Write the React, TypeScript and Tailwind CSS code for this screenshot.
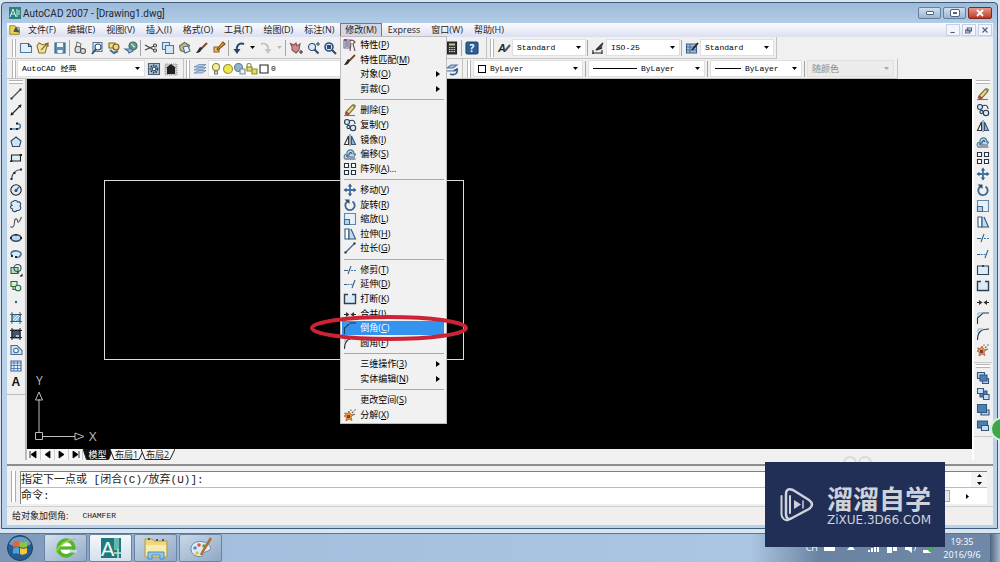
import type { ReactNode } from "react";

const ui = "font-['Open_Sans','Noto_Sans_CJK_SC',sans-serif]";
const mono = "font-['Liberation_Mono','Noto_Sans_CJK_SC',monospace]";

// All glyphs are drawn on a 14 x 14 grid
const glyphs: Record<string, ReactNode> = {
  // draw
  line: <><path d="M3 11 11 3" /><path d="M1.500 10.500h2v2h-2zM10.500 1.500h2v2h-2z" fill="#223" stroke="none" /></>,
  xline: <><path d="M2 12 12 2" stroke="#222" /><path d="m1.500 12.500 1-3.500 2.500 2.500zM12.500 1.500 9 2.500 11.500 5z" fill="#222" stroke="none" /></>,
  pline: <><path d="M2 10h6M8 10c4 0 5-5 0-5.500" stroke="#4a7fb5" strokeWidth="1.500" /><path d="M1 9h2v2H1zM7 9h2v2H7zM7 3.500h2v2H7z" fill="#223" stroke="none" /></>,
  polygon: <path d="M7 2 12 6 10.500 11.500h-7L2 6z" fill="#cfe4f3" />,
  rect: <><path d="M2.500 4h9v6h-9z" fill="#dcebf6" stroke="#222" /><path d="M1 9.500h2.500V11H1zM10.500 3H13v2h-2.500z" fill="#222" stroke="none" /></>,
  arc: <><path d="M2.500 12C3 7 6 3 12 2.500" /><path d="M1.500 11h2v2h-2zM11 1.500h2v2h-2zM4.500 5h2v2h-2z" fill="#223" stroke="none" /></>,
  circle: <><circle cx="7" cy="7" r="5.200" fill="#dcebf6" stroke="#222" /><path d="M7 7.500 10 4" stroke="#3977b7" strokeWidth="1.500" /><circle cx="7" cy="7.500" r="1" fill="#3977b7" /></>,
  cloud: <path d="M4 2.500C6 .8 8 1.500 8.500 3c3-.5 4 2 2.500 4 2 2 0 5-3 4.500-2 2-5 1-4.500-1.500-3-1-2.500-3-.5-3.500C1 5 2 2.500 4 2.500z" fill="#dcebf6" />,
  spline: <path d="M1.500 11.500c2 2 4 0 4-4.500s3-3.500 3-1 2 1 4-4" stroke="#555" />,
  ellipse: <><ellipse cx="7" cy="7" rx="5" ry="3.200" fill="#b9d7ee" strokeWidth="1.500" /><path d="M1 6h2v2H1zM6 3h2v1.500H6zM11 6h2v2h-2z" fill="#223" stroke="none" /></>,
  earc: <><path d="M3 8.500C0 5 5 3.500 8 4s5 2 3.500 4.500-4 2-4.500 1.500" fill="#dcebf6" stroke="#4a6f94" strokeWidth="1.500" /><path d="M2 8h2v2H2zM6 9h2v2H6z" fill="#223" stroke="none" /></>,
  insert: <><path d="M2 4.500h7v6H2z" fill="#b9e0b2" stroke="#2c6b37" /><circle cx="8.500" cy="5" r="3.500" /><path d="M3 10.500h5l2-2" /><path d="M13.500 13.500v-3l-3 3z" fill="#111" stroke="none" /></>,
  block: <><path d="M2 2.500h6v5H2zM4 7.500v3h3" stroke="#2c6b37" fill="#d6efd0" /><circle cx="9" cy="9" r="2.800" fill="#d6e9f5" stroke="#2c6b37" /></>,
  point: <circle cx="7" cy="7" r="1.200" fill="#355d86" stroke="none" />,
  hatch: <><path d="M3 3.500h8v7H3z" fill="#8fc6e3" stroke="#4c7e9d" /><path d="M3 1v12M11 1v12M1 3.500h12M1 10.500h12" stroke="#39566c" strokeWidth=".9" /><path d="m4 9 5-5M6 10l5-5" stroke="#fff" strokeWidth=".8" /></>,
  gradient: <><path d="M3 3h8v8H3z" fill="#4b5664" /><path d="M3 1v12M11 1v12M1 3.500h12M1 10.500h12" stroke="#20252c" /><path d="M7 8h3v2H7z" fill="#aebbc6" stroke="none" /></>,
  region: <><path d="M2 2.500h6l5 5v4H2z" fill="#cfe4f3" stroke="#4a7193" /><circle cx="7" cy="7.500" r="2.300" fill="#f5fafd" stroke="#4a7193" /></>,
  table: <><path d="M2 2h10v10H2z" fill="#e7f1fa" stroke="#3a6ba3" /><path d="M2 4h10M2 6.500h10M2 9.500h10M5 2v10M8.500 2v10" stroke="#3a6ba3" strokeWidth=".8" /></>,
  mtext: <text x="2.500" y="11" fontSize="12" fontWeight="600" fontFamily="Liberation Sans, sans-serif" fill="#111" stroke="none">A</text>,
  // modify
  erase: <><path d="M1 12.500h11" stroke="#777" /><path d="m3 9 3 2 6-7-2.500-2z" fill="#e6d58c" stroke="#756527" /><path d="m3 9 3 2-1.500 1.500L2 11z" fill="#c8494c" stroke="#84363b" strokeWidth=".6" /><path d="m9.500 2 2.500 2 1-1.500L11 1z" fill="#5c9a4d" stroke="none" /></>,
  copy: <g stroke="#243c54" fill="#d7e8f5"><circle cx="4" cy="4" r="2.500" /><circle cx="10" cy="10" r="2.700" /><circle cx="5.500" cy="9" r="1.600" /><path d="M6.500 3C10 1 12 3 12 6" fill="none" /></g>,
  mirror: <><path d="M5.500 3v8.500H1.500z" fill="#fff" stroke="#333" /><path d="M8.500 3v8.500h4z" fill="#8bb9dd" stroke="#31587b" /><path d="M7 1v12" strokeWidth=".8" /></>,
  offset: <><path d="M1.500 11.500C0 8 3 7 4 7c-1-5 7-6 7 0 2-.5 2 1 0 1.500" stroke="#457597" fill="#b9d7ee" /><path d="M4 10c-1-2 1-2 2-2 0-3 3-3 3-1M1.500 12h11M4 10h8" /></>,
  array: <g fill="#fff" stroke="#26323e"><path d="M1.500 1.500h4v4h-4zM8.500 1.500h4v4h-4zM1.500 8.500h4v4h-4zM8.500 8.500h4v4h-4z" /></g>,
  move: <><path d="M7 2v10M2 7h10" stroke="#4672a0" strokeWidth="1.800" /><path d="m7 .5 2.200 3H4.800zM7 13.500l2.200-3H4.800zM.5 7l3-2.200v4.400zM13.500 7l-3-2.200v4.400z" fill="#355f8c" stroke="none" /></>,
  rotate: <><path d="M5 3.200a4.700 4.700 0 1 0 4.500.3" stroke="#3d698f" strokeWidth="1.900" /><path d="M1.500 1.500h5v4.500z" fill="#2e4d6b" stroke="none" /></>,
  scale: <><path d="M1.500 1.500h11v11h-11z" fill="#e6f1f9" stroke="#6288a7" /><path d="M1.500 7.500h5v5h-5z" fill="#b4d3e9" stroke="#40698d" /></>,
  stretch: <><path d="M2 2h4v10H2z" fill="#fff" stroke="#31587b" /><path d="M6 2v10h6.500L8 2" fill="#c1dcef" stroke="#31587b" /></>,
  lengthen: <><path d="M3 11 11 3" stroke="#335f8c" /><path d="M1.500 10.500h2v2h-2zM10.500 1.500h2v2h-2z" fill="#222" stroke="none" /></>,
  trim: <><path d="M1 7.500h4M8 3 5 11" stroke="#3c5f80" /><path d="M8 7.500h5" strokeDasharray="2 1" stroke="#3977b7" /></>,
  extend: <><path d="M1 7.500h3M12 3 9 11" stroke="#3c5f80" /><path d="M4.500 7.500h5" strokeDasharray="2 1" stroke="#3977b7" /></>,
  breakpt: <><path d="M1.500 3h11v8.500h-11z" fill="#dcebf6" stroke="#2b4158" /><path d="M6 2h2v2H6z" fill="#2b4158" stroke="none" /></>,
  break: <path d="M5 2.500H1.500v9h11v-9H9" fill="#dcebf6" stroke="#2b4158" strokeWidth="1.400" />,
  join: <><path d="M1 7.500h12" stroke="#222" strokeDasharray="5 2" /><path d="m3 5 3.500 2.500L3 10zM11 5 7.500 7.500 11 10z" fill="#333" stroke="none" /></>,
  chamfer: <><path d="M1.500 13V7l5.500-5h6" stroke="#26394d" /><path d="M2 6V2h5" stroke="#65a3ce" strokeWidth=".8" /></>,
  fillet: <><path d="M1.500 13C1.500 5 5 2 13 2" stroke="#26394d" /><path d="M2 6V2h5" stroke="#65a3ce" strokeWidth=".8" /></>,
  explode: <><path d="m1.500 5 3 .5L6 3l1.500 3L10 7 8 9l1 3.500L6 11l-3 2 .5-3.500L1 8l2-1z" fill="#e8953b" stroke="#b04a26" strokeWidth=".7" /><path d="M4 7h3v3H4z" fill="#6b4a34" stroke="none" /><path d="m9 5 1.500-1.500M11.500 2.500l1-1M10 7l2-1M8 3V1.500" stroke="#666" /></>,
  // draw order
  front: <g stroke="#34567c"><path d="M1.500 1.500h7v6h-7z" fill="#b8d2ea" /><path d="M6.500 7.500h6v5h-6z" fill="#b8d2ea" /><path d="M4 4h7v6H4z" fill="#4b80b8" /></g>,
  back: <g stroke="#34567c"><path d="M4 4h7v6H4z" fill="#4b80b8" /><path d="M1.500 1.500h6v5h-6zM7.500 7.500h5.500v5H7.500z" fill="#c9def1" /></g>,
  above: <g stroke="#34567c"><path d="M5 7h8v5H5z" fill="#b8d2ea" /><path d="M1.500 1.500h9v8h-9z" fill="#4b80b8" /></g>,
  under: <g stroke="#34567c"><path d="M1.500 2h10v7h-10z" fill="#4b80b8" /><path d="M5.500 6.500h7v5h-7z" fill="#c9def1" /></g>,
  // standard bar
  new: <><path d="M1.500 2.500h8l3 3v6h-11z" fill="#e3f0fb" stroke="#51789e" /><path d="M9.500 2.500v3h3" /></>,
  open: <><path d="M1 5 3 2l4 2 5-2-3 10H3z" fill="#f2e4a1" stroke="#8c7635" /><path d="m5 9 6-6M9 3h3v3" stroke="#806c31" /></>,
  save: <><path d="M2 2h10v10H2z" fill="#5e8dba" stroke="#365f87" /><path d="M4 2h6v4H4zM4.500 9h5v3h-5z" fill="#eef5fb" stroke="none" /></>,
  plot: <><path d="m4 1 4 2-1 4-4-1z" fill="#fff" stroke="#777" /><ellipse cx="5" cy="8.500" rx="3" ry="3.200" fill="#dedede" stroke="#555" /><circle cx="10" cy="10" r="2.500" fill="#dedede" stroke="#555" /></>,
  preview: <><path d="M3 1.500h9v9H3z" fill="#e3f0fb" stroke="#51789e" /><circle cx="8" cy="6" r="3" fill="#fff" /><path d="m6 8-4 5" strokeWidth="1.800" /></>,
  publish: <><path d="M2 2h6v5H2z" fill="#f3df78" stroke="#786a30" /><circle cx="9" cy="6" r="3" fill="#f0d879" stroke="#705d25" /><path d="m3 9 4 3 4-2" stroke="#4a6c8c" strokeWidth="2" /></>,
  dwf: <><circle cx="9" cy="5" r="4" fill="#5d9c6d" stroke="#36648d" /><path d="M7 3c3 0 1 3 4 3" stroke="#d9efdf" /><path d="M1 8h5V6l3 4-4 2-1-2z" fill="#9ebfdb" stroke="#4b6e8e" /></>,
  cut: <g stroke="#444"><path d="m1 4 9 5M1 9l9-4" /><circle cx="11" cy="4.500" r="1.500" /><circle cx="11" cy="9.500" r="1.500" /></g>,
  clip: <g stroke="#527798" fill="#d5e7f6"><path d="M1.500 1.500h7v7h-7z" /><path d="M4.500 4.500h8v8h-8z" /></g>,
  paste: <><path d="m1.500 5 5-3.500 5 3-3 7-6-2z" fill="#c6c08b" stroke="#6d694a" /><path d="m5 6 5-1 2 5-5 2z" fill="#e9f3fb" stroke="#53718d" /></>,
  brush: <><path d="M12 2 6 8" stroke="#764c2f" strokeWidth="2" /><path d="m7 7-2-1-4 6c3 0 5-1 6-5z" fill="#2c2c2c" stroke="none" /></>,
  blockedit: <><path d="M2 6h5v5H2z" fill="#e9c066" stroke="#8a5f27" /><path d="m5 8 6-7 2 2-7 6z" fill="#e7a843" stroke="#7c4c1b" /></>,
  undo: <><path d="M12 3C7 1 4 5 5 10" stroke="#25456e" strokeWidth="2" /><path d="M1.500 8h7L5 13z" fill="#25456e" stroke="none" /></>,
  redo: <><path d="M2 3c5-2 8 2 7 7" stroke="#bbb" strokeWidth="1.500" /><path d="M5.500 8h7L9 13z" fill="#c6c6c6" stroke="none" /></>,
  pan: <><path d="M3 6 1.500 2.500 5 4l2-2 1 3 3-2-1 6-3 3-4-3z" fill="#c98f8f" stroke="#8d5058" /><path d="M10 11h4M12 9v4" stroke="#333" /></>,
  zoomrt: <><circle cx="6" cy="6" r="3.500" fill="#dbeaf6" /><path d="m8.500 8.500 4 4" strokeWidth="2" /><path d="M10 3h4M12 1v4" /></>,
  zoomwin: <><circle cx="6" cy="6" r="4" fill="#dbeaf6" stroke="#2c4f80" strokeWidth="1.600" /><path d="m9 9 4 4" strokeWidth="2" /><path d="M4.500 4.500h3v3h-3z" fill="#2c4f80" /></>,
  props: <><path d="M1 2h6v8H1z" fill="#eff3f7" stroke="#5b6f85" /><path d="M2 4h4M2 6h4M2 8h4" /><path d="M7 3c2-2 4 0 5 1l-2 2 2 7M8 5l-1 8" stroke="#744b50" /><path d="M1 1h3v2H1z" fill="#b23aa0" stroke="none" /></>,
  calc: <><path d="M2.500 1h9v12h-9z" fill="#3a3531" stroke="#222" /><path d="M4 2.500h6v2H4z" fill="#b7c99a" stroke="none" /><path d="M4 6.500h6M4 8.500h6M4 10.500h6" stroke="#d9cfc4" strokeDasharray="1.500 .8" /></>,
  help: <><rect x="1" y="1" width="12" height="12" rx="1.500" fill="#2b5f95" stroke="#1c446f" /><text x="4.500" y="11" fontSize="10" fontWeight="700" fontFamily="Open Sans, sans-serif" fill="#fff" stroke="none">?</text></>,
  textstyle: <><text x="1" y="11" fontSize="11" fontStyle="italic" fontWeight="600" fontFamily="Liberation Sans, sans-serif" fill="#222" stroke="none">A</text><path d="m13 4-5 6" stroke="#555" strokeWidth="2" /></>,
  dimstyle: <><path d="M1 12h10M2 9v4M11 9v4" stroke="#222" /><path d="m12 2-7 7 6-2" stroke="#333" strokeWidth="1.600" fill="#555" /></>,
  tablestyle: <><path d="M1.500 3h10v9h-10z" fill="#9dbddb" stroke="#3e618a" /><path d="M1.500 6h10M1.500 9h10M5 3v9" stroke="#3e618a" strokeWidth=".8" /><path d="m13 2-6 7" stroke="#222" strokeWidth="1.800" /></>,
  gear: <><path d="M1.500 1.500h11v11h-11z" fill="#a9c0d4" stroke="#4b6074" /><circle cx="7" cy="7" r="3.500" strokeDasharray="1.500 1" stroke="#26384a" strokeWidth="1.800" /><circle cx="7" cy="7" r="1.800" fill="#fff" /></>,
  home: <><path d="M1 2h12v11H1z" fill="#c9c9c9" stroke="#999" strokeDasharray="1 1" /><path d="m7 2 5 4h-1v6H3V6H2z" fill="#222" stroke="none" /></>,
  layers: <g stroke="#6688b4" fill="#b3c9e4" strokeWidth=".8"><path d="M1 11h8l4-2.500H6z" /><path d="M1 8h8l4-2.500H6z" /><path d="M1 5h8l4-2.500H6z" /></g>,
  layerprev: <><path d="M2 6h6l4-3H6zM2 9h7l3-2" fill="#a9c6e2" stroke="#54779e" /><path d="M5 12c5 2 8-1 7-5L9 9" stroke="#315a88" strokeWidth="1.600" /></>,
  bulb: <><circle cx="7" cy="5" r="3.500" fill="#f5ef9d" stroke="#8a8438" /><path d="M5.500 9h3v3h-3z" fill="#ddd" stroke="#777" /></>,
  sun: <circle cx="7" cy="7" r="4.500" fill="#eee64b" stroke="#9a9030" />,
  freeze: <><circle cx="5.500" cy="5.500" r="4" fill="#8fb3cd" stroke="#5e8199" /><path d="M7 7h5v5H7z" fill="#eee" stroke="#789" /></>,
  unlock: <><path d="M2 6V3c0-2 4-2 4 0v2" stroke="#8a8438" /><path d="M2 5h5v4H2zM7 7h5v5H7z" fill="#e6df62" stroke="#8a8438" /></>,
  swatch: <path d="M3 3h8v8H3z" fill="#fff" stroke="#222" />,
};

function Icon({ name }: { name: string }) {
  return (
    <svg viewBox="0 0 14 14" className="h-3.5 w-3.5 shrink-0 overflow-visible" fill="none" stroke="#2f4b68" strokeWidth="1.1" aria-hidden>
      {glyphs[name]}
    </svg>
  );
}

function Tool({ name }: { name: string }) {
  return (
    <button type="button" aria-label={name} className="grid h-4 w-[17px] shrink-0 place-items-center">
      <Icon name={name} />
    </button>
  );
}

const Tools = ({ names }: { names: string[] }) => names.map((n, i) => <Tool key={i} name={n} />);
const Sep = () => <span className="mx-px h-4 w-px shrink-0 bg-[#a5a5a5]" />;
const Grip = () => <span className="mx-px h-[18px] w-1 shrink-0 border-x border-[#b4b4b4] bg-white" />;
const HGrip = () => <span className="mt-px mb-0.5 h-1 w-3.5 border-y border-[#b4b4b4] bg-white" />;

function Arrow({ className = "fill-black" }: { className?: string }) {
  return (
    <svg viewBox="0 0 5 3" className={`h-[3px] w-[5px] shrink-0 ${className}`} aria-hidden>
      <path d="M0 0h5L2.500 3z" />
    </svg>
  );
}

type ComboProps = { label: string; value: string; width: string; icon?: ReactNode; disabled?: boolean };

function Combo({ label, value, width, icon, disabled }: ComboProps) {
  return (
    <label
      className={`flex h-[17px] shrink-0 items-center gap-1 border border-[#e0e0e0] px-1 ${width} ${
        disabled ? `bg-[#ececec] text-[9px] text-[#8b8b8b] ${ui}` : `bg-white text-[8px] text-black ${mono}`
      }`}
    >
      {icon}
      <select aria-label={label} disabled={disabled} className="h-full min-w-0 flex-1 appearance-none bg-transparent leading-none outline-none">
        <option>{value}</option>
      </select>
      <Arrow className={disabled ? "fill-[#aaa]" : "fill-black"} />
    </label>
  );
}

const Rule = ({ width }: { width: string }) => <span className={`h-px shrink-0 bg-black ${width}`} />;

type Entry = { text: string; hot: string; icon?: string; sub?: boolean; more?: boolean; active?: boolean };

const modifyMenu: Entry[][] = [
  [
    { text: "特性", hot: "P", icon: "props" },
    { text: "特性匹配", hot: "M", icon: "brush" },
    { text: "对象", hot: "O", sub: true },
    { text: "剪裁", hot: "C", sub: true },
  ],
  [
    { text: "删除", hot: "E", icon: "erase" },
    { text: "复制", hot: "Y", icon: "copy" },
    { text: "镜像", hot: "I", icon: "mirror" },
    { text: "偏移", hot: "S", icon: "offset" },
    { text: "阵列", hot: "A", icon: "array", more: true },
  ],
  [
    { text: "移动", hot: "V", icon: "move" },
    { text: "旋转", hot: "R", icon: "rotate" },
    { text: "缩放", hot: "L", icon: "scale" },
    { text: "拉伸", hot: "H", icon: "stretch" },
    { text: "拉长", hot: "G", icon: "lengthen" },
  ],
  [
    { text: "修剪", hot: "T", icon: "trim" },
    { text: "延伸", hot: "D", icon: "extend" },
    { text: "打断", hot: "K", icon: "break" },
    { text: "合并", hot: "J", icon: "join" },
    { text: "倒角", hot: "C", icon: "chamfer", active: true },
    { text: "圆角", hot: "F", icon: "fillet" },
  ],
  [
    { text: "三维操作", hot: "3", sub: true },
    { text: "实体编辑", hot: "N", sub: true },
  ],
  [
    { text: "更改空间", hot: "S" },
    { text: "分解", hot: "X", icon: "explode" },
  ],
];

function ModifyMenu() {
  return (
    <div role="menu" className="absolute top-full -left-px z-30 flex h-[388px] w-[107px] flex-col border border-[#bdbdbd] bg-[#f1f1f1] py-px text-black">
      {modifyMenu.map((group, g) => (
        <div key={g} className="contents">
          {g > 0 && <hr className="my-[3px] mr-0.5 ml-[3px] border-[#a9a9a9]" />}
          {group.map((e) => (
            <button
              key={e.text}
              type="button"
              role="menuitem"
              className={`relative mr-0.5 ml-px flex min-h-0 flex-1 items-center text-left ${
                e.active ? "z-10 bg-[#3393ee] text-white" : ""
              }`}
            >
              <span className="mr-[3px] ml-px h-3.5 w-3.5">{e.icon && <Icon name={e.icon} />}</span>
              <span className="flex-1 leading-3">
                {e.text}(<u>{e.hot}</u>){e.more && "..."}
              </span>
              {e.sub && (
                <svg viewBox="0 0 4 6" className="mr-1 h-1.5 w-1" aria-hidden>
                  <path d="M0 0v6l4-3z" />
                </svg>
              )}
              {e.active && (
                <svg viewBox="0 0 160 28" className="pointer-events-none absolute top-1/2 -left-[33px] h-7 w-40 -translate-y-1/2" aria-hidden>
                  <ellipse cx="80" cy="14" rx="77" ry="11" fill="none" stroke="#cb2436" strokeWidth="4" />
                </svg>
              )}
            </button>
          ))}
        </div>
      ))}
    </div>
  );
}

const menus = ["文件(F)", "编辑(E)", "视图(V)", "插入(I)", "格式(O)", "工具(T)", "绘图(D)", "标注(N)", "修改(M)", "Express", "窗口(W)", "帮助(H)"];

function MenuBar() {
  return (
    <nav className="flex h-3.5 items-center gap-px bg-gradient-to-b from-[#fafbff] to-[#dcdff1] pl-0.5 text-[9px] leading-3 text-[#222]">
      <svg viewBox="0 0 14 14" className="mr-px h-3.5 w-3" aria-hidden>
        <path d="M1 2h6l2 2h3v8H1z" fill="#efd44e" stroke="#8c7a2a" />
        <path d="m5 9 3-6 5 7z" fill="#3d536e" />
      </svg>
      {menus.map((m) =>
        m === "修改(M)" ? (
          <div key={m} className="relative border border-[#777] bg-[#d4d6e2]">
            <button type="button" aria-expanded="true" className="block px-1">{m}</button>
            <ModifyMenu />
          </div>
        ) : (
          <button key={m} type="button" className="px-[5px] whitespace-nowrap">{m}</button>
        ),
      )}
      <div className="ml-auto flex gap-0.5 pr-px">
        {["M4 9h5", "M5 3.500h5v3.500H5zM3 6h5v3.500H3z", "m4 3 6 6M10 3 4 9"].map((d, i) => (
          <button key={i} type="button" aria-label={["Minimize", "Restore", "Close"][i]} className="border border-[#c3cfe2] bg-[#f2f5fb]">
            <svg viewBox="0 0 14 12" className="h-2.5 w-3" fill="none" stroke="#4c5d7c" strokeWidth="1.3"><path d={d} /></svg>
          </button>
        ))}
      </div>
    </nav>
  );
}

function TitleBar() {
  return (
    <header className="flex h-5 items-center gap-0.5 pl-0.5 text-[#1b2735]">
      <svg viewBox="0 0 12 12" className="h-3 w-3" aria-hidden>
        <path d="M0 0h12v12H0z" fill="#2b8079" />
        <path d="m1 10 3-8 3 8M2 7h4M8 2v8M10 3v5" stroke="#d8f2ee" fill="none" />
      </svg>
      <h1 className="font-['Roboto',sans-serif] text-[10px]">AutoCAD 2007 - [Drawing1.dwg]</h1>
      <div className="ml-auto flex gap-0.5 pr-px">
        <button type="button" aria-label="Minimize" className="grid h-3 w-[23px] place-items-center rounded-[2px] border border-[#64809f] bg-gradient-to-b from-[#cddff1] to-[#9bb6d3]">
          <span className="h-1 w-2 rounded-[1px] border border-[#52647a] bg-white" />
        </button>
        <button type="button" aria-label="Maximize" className="grid h-3 w-[23px] place-items-center rounded-[2px] border border-[#64809f] bg-gradient-to-b from-[#cddff1] to-[#9bb6d3]">
          <span className="h-1.5 w-2 rounded-[1px] border-2 border-white bg-[#52647a] outline outline-[#52647a]" />
        </button>
        <button type="button" aria-label="Close" className="grid h-3 w-6 place-items-center rounded-[2px] border border-[#7c2a25] bg-gradient-to-b from-[#e29a8c] to-[#bd3521]">
          <svg viewBox="0 0 8 8" className="h-2 w-2" stroke="#fff" strokeWidth="2"><path d="m1 1 6 6M7 1 1 7" /></svg>
        </button>
      </div>
    </header>
  );
}

const bar = "flex items-center border-r border-b border-[#c3c3c3]";

function Toolbars() {
  return (
    <div className="bg-[#f0f0f0]">
      <div className="flex h-[22px] items-stretch">
        <div className={`${bar} pr-1.5 pl-1`}>
          <Grip />
          <Tools names={["new", "open", "save"]} />
          <Sep />
          <Tools names={["plot", "preview", "publish", "dwf"]} />
          <Sep />
          <Tools names={["cut", "clip", "paste", "brush", "blockedit"]} />
          <Sep />
          <Tool name="undo" />
          <button type="button" aria-label="Undo list" className="grid h-4 w-2.5 place-items-center"><Arrow /></button>
          <Tool name="redo" />
          <button type="button" aria-label="Redo list" className="grid h-4 w-2.5 place-items-center"><Arrow className="fill-[#bbb]" /></button>
          <Sep />
          <Tools names={["pan", "zoomrt", "zoomwin", "zoomrt"]} />
          <Sep />
          <Tools names={["props", "table", "clip", "layers", "open", "calc"]} />
          <Sep />
          <Tool name="help" />
        </div>
        <div className={`${bar} pr-0.5 pl-0.5`}>
          <Grip />
          <Tool name="textstyle" />
          <Combo label="Text style" value="Standard" width="w-[74px]" />
          <Sep />
          <Tool name="dimstyle" />
          <Combo label="Dimension style" value="ISO-25" width="w-[74px]" />
          <Sep />
          <Tool name="tablestyle" />
          <Combo label="Table style" value="Standard" width="w-[74px]" />
        </div>
      </div>
      <div className="flex h-5 items-stretch">
        <div className={`${bar} pr-1 pl-1`}>
          <Grip />
          <Combo label="Workspace" value="AutoCAD 经典" width="w-[128px]" />
          <Tools names={["gear", "home"]} />
        </div>
        <div className={`${bar} pr-0.5 pl-px`}>
          <Grip />
          <Tool name="layers" />
          <button type="button" aria-label="Layer" className={`flex h-[17px] w-[235px] items-center border border-[#e0e0e0] bg-white text-[8px] ${mono}`}>
            {["bulb", "sun", "freeze", "unlock", "swatch"].map((n) => (
              <span key={n} className="-mr-0.5"><Icon name={n} /></span>
            ))}
            <span className="flex-1 pl-0.5 text-left">0</span>
            <Arrow />
          </button>
          <Tool name="layerprev" />
        </div>
        <div className={`${bar} gap-px pr-[3px] pl-[3px]`}>
          <Grip />
          <Combo label="Color" value="ByLayer" width="w-[110px]" icon={<span className="h-2 w-2 shrink-0 border border-black" />} />
          <Sep />
          <Combo label="Linetype" value="ByLayer" width="w-[117px]" icon={<Rule width="w-[44px]" />} />
          <Sep />
          <Combo label="Lineweight" value="ByLayer" width="w-[92px]" icon={<Rule width="w-[26px]" />} />
          <Sep />
          <Combo label="Plot style" value="随颜色" width="w-[87px]" disabled />
        </div>
      </div>
    </div>
  );
}

const drawTools = ["line", "xline", "pline", "polygon", "rect", "arc", "circle", "cloud", "spline", "ellipse", "earc", "insert", "block", "point", "hatch", "gradient", "region", "table", "mtext"];
const modifyTools = ["erase", "copy", "mirror", "offset", "array", "move", "rotate", "scale", "stretch", "trim", "extend", "breakpt", "break", "join", "chamfer", "fillet", "explode"];
const orderTools = ["front", "back", "above", "under"];

function Canvas() {
  return (
    <svg className="min-h-0 w-full flex-1 bg-black" fill="none" aria-label="Drawing1">
      <rect x="77.5" y="101.5" width="359" height="179" stroke="#dcdcdc" />
      <svg y="100%" overflow="visible" stroke="#bdbdbd">
        <path d="M8.500-16.500h7v7h-7zM12-17v-33M16-12.500h32" />
        <path d="m12-57-3.500 8h7zM57-12.500l-9-3.500v7z" />
        <text x="9" y="-64" fontSize="12" fontFamily="Open Sans, sans-serif" fill="#bdbdbd" stroke="none">Y</text>
        <text x="62" y="-8" fontSize="13" fontFamily="Open Sans, sans-serif" fill="#bdbdbd" stroke="none">X</text>
      </svg>
    </svg>
  );
}

function SheetTabs() {
  return (
    <div className="flex h-[11px] items-stretch bg-[#f0f0f0] text-[9px] leading-[11px] whitespace-nowrap text-[#222]">
      {["M3 2v7M9 2v7L4 5.500z", "M9 2v7L4 5.500z", "M4 2v7l5-3.500z", "M10 2v7M4 2v7l5-3.500z"].map((d, i) => (
        <button key={i} type="button" aria-label={["First", "Previous", "Next", "Last"][i]} className="border-r border-[#ccc] bg-[#f7f7f7]">
          <svg viewBox="0 0 13 11" className="h-[11px] w-[13px]" fill="#000" stroke="#000"><path d={d} strokeWidth=".8" /></svg>
        </button>
      ))}
      {["模型", "布局1", "布局2"].map((t, i) => (
        <button key={t} type="button" className={`relative text-center ${i === 0 ? "w-[27px] text-white" : "w-[31px]"}`}>
          <svg viewBox="0 0 34 11" preserveAspectRatio="none" className="absolute inset-y-0 left-0 h-full w-[calc(100%+3px)]" aria-hidden>
            <path d="M0 0 4 10.500h25L34 0" fill={i === 0 ? "#111" : "#f5f5f5"} stroke="#222" />
          </svg>
          <span className="relative pl-0.5">{t}</span>
        </button>
      ))}
    </div>
  );
}

function Workspace() {
  return (
    <div className="flex min-h-0 flex-1 bg-[#f0f0f0]">
      <aside className="w-5 border-r-2 border-[#b9b9b9]">
        <div className="flex flex-col items-center border-b border-[#bbb] pb-1">
          <HGrip />
          <Tools names={drawTools} />
        </div>
      </aside>
      <main className="flex min-w-0 flex-1 flex-col">
        <Canvas />
        <SheetTabs />
      </main>
      <aside className="w-[21px] border-l-2 border-white pr-px">
        <div className="flex flex-col items-center">
          <HGrip />
          <Tools names={modifyTools} />
        </div>
        <div className="mt-1 flex flex-col items-center border-y border-[#c8c8c8] pb-0.5">
          <HGrip />
          <Tools names={orderTools} />
        </div>
      </aside>
    </div>
  );
}

function CommandLine() {
  return (
    <section className="mt-1 flex border-t-2 border-[#8d8d8d] bg-[#f0f0f0] pt-[5px] pb-0.5">
      <span className="mx-1 h-[31px] w-[5px] border-x border-[#aaa] bg-white" />
      <div className={`min-w-0 flex-1 border-t border-l border-[#808080] bg-white text-[11px] text-[#222] ${mono}`}>
        <div className="flex h-4 items-center border-b border-[#bcbcbc]">
          <output className="flex-1 leading-4">指定下一点或 [闭合(C)/放弃(U)]:</output>
          <span className="flex h-full w-4 flex-col items-center justify-between bg-[#f4f4f4] py-0.5">
            <Arrow className="rotate-180 fill-black" />
            <Arrow />
          </span>
        </div>
        <label className="flex h-4 items-center leading-4">
          命令:
          <input aria-label="命令" className="min-w-0 flex-1 outline-none" />
          <span className="h-3 w-10 border border-[#aaa] bg-[#e6e6e6]" />
          <svg viewBox="0 0 3 5" className="mr-[18px] ml-4 h-[5px] w-[3px]" aria-hidden><path d="M0 0v5l3-2.500z" /></svg>
        </label>
      </div>
      <span className="w-1.5" />
    </section>
  );
}

const taskButton = "grid h-7 w-[43px] place-items-center rounded-[2px] border border-[#6b84a4]";

function Taskbar() {
  return (
    <footer className="flex h-[29px] items-center border-t border-[#5f7691] bg-[linear-gradient(90deg,#7b95b8,#a3bfdd_23%,#abc6e2_75%,#6a83a2_82%,#7089a8)] text-white">
      <button type="button" aria-label="Start" className="mr-2.5 ml-1.5">
        <svg viewBox="0 0 28 28" className="h-7 w-7" aria-hidden>
          <circle cx="14" cy="14" r="12.500" fill="#275b92" stroke="#1d3e63" />
          <path d="M3 10a12 12 0 0 1 22 0c-6 4-15 4-22 0z" fill="#8fb4d6" opacity=".7" />
          <path d="M7 9c2-2 4-2 6-1v5c-2-1-4-1-6 1z" fill="#e9632d" />
          <path d="M14 8c2 1 4 1 7-1v6c-3 1-5 1-7 0z" fill="#8cc63f" />
          <path d="M7 15c2-2 4-2 6-1v6c-2-1-4-1-6 0z" fill="#4aa3e0" />
          <path d="M14 14c2 1 4 1 7 0v5c-3 2-5 2-7 1z" fill="#f8c732" />
        </svg>
      </button>
      <div className="flex gap-0.5">
        <button type="button" aria-label="Browser" className={`${taskButton} bg-gradient-to-br from-[#d5e1ee] to-[#93abc8]`}>
          <svg viewBox="0 0 26 26" className="h-6 w-6" aria-hidden>
            <circle cx="13" cy="13" r="8.500" fill="#fff" stroke="#54b52c" strokeWidth="4" />
            <path d="M6 13h14" stroke="#54b52c" strokeWidth="3.500" />
            <path d="M17 15h8v3h-8z" fill="#c9d7e6" />
            <path d="M2 18C6 8 18 2 24 4" stroke="#8fd64e" strokeWidth="1.800" fill="none" />
          </svg>
        </button>
        <button type="button" aria-label="AutoCAD 2007" className={`${taskButton} bg-gradient-to-b from-[#f4f8fc] to-[#d3e0ee]`}>
          <svg viewBox="0 0 24 24" className="h-6 w-6" aria-hidden>
            <path d="M2 2h20v20H2z" fill="#1d7a77" />
            <path d="M15 2h5v12h-5z" fill="#68b5ad" />
            <path d="M15 17h8M19 13v9" stroke="#bfe5df" strokeWidth="1.500" />
            <text x="2" y="20" fontSize="20" fontFamily="Liberation Sans, sans-serif" fill="#f2fbfa">A</text>
          </svg>
        </button>
        <button type="button" aria-label="Explorer" className={`${taskButton} bg-gradient-to-br from-[#c9d8e8] to-[#90a8c6]`}>
          <svg viewBox="0 0 26 24" className="h-6 w-7" aria-hidden>
            <path d="M2 3h7l2 2h13v16H2z" fill="#edd782" stroke="#b59c49" />
            <path d="M3 9h20v11H3z" fill="#f8ebae" />
            <path d="M5 23v-7h16v7h-4v-4H9v4z" fill="#8fc5ea" stroke="#4c8fc0" />
            <path d="M5 3h2M13 4h2M19 4h2" stroke="#7a4a2a" strokeWidth="2" />
          </svg>
        </button>
        <button type="button" aria-label="Paint" className={`${taskButton} bg-gradient-to-br from-[#c9d8e8] to-[#90a8c6]`}>
          <svg viewBox="0 0 26 24" className="h-6 w-7" aria-hidden>
            <path d="M3 14C2 7 10 4 16 6s9 7 4 9-4 1-5 4-11 2-12-5z" fill="#dfeaf3" stroke="#7189a2" />
            <circle cx="7" cy="12" r="1.800" fill="#4b8fd0" />
            <circle cx="11" cy="9" r="1.800" fill="#d8553f" />
            <circle cx="16" cy="10" r="1.800" fill="#5daa45" />
            <circle cx="9" cy="17" r="1.800" fill="#e7bd3b" />
            <path d="m23 2-8 13-2 4" stroke="#a9703d" strokeWidth="2.500" fill="none" />
          </svg>
        </button>
      </div>
      <div className="ml-auto flex items-center gap-1.5 text-[9px] text-white">
        <span>CH</span>
        <svg viewBox="0 0 110 12" className="h-3 w-[110px]" fill="#fff" aria-hidden>
          <path d="M0 2h11v7H0zM23 8l4-5 4 5zM44 10V8h2v2zM47 10V6h2v4zM50 10V4h2v6zM53 10V1h2v9zM63 1h5v10h-5zM69 4h4v5h-4zM81 4h3l4-3v10l-4-3h-3zM99 8h8v3h-8z" />
          <path d="M90 3c2 2 2 4 0 6" stroke="#fff" fill="none" />
          <path d="m103 5 3 4 4-5" stroke="#3fae49" strokeWidth="2" fill="none" />
        </svg>
        <time className="w-11 text-center leading-[13px]">19:35<br />2016/9/6</time>
        <button type="button" aria-label="Show desktop" className="h-7 w-2.5 border-l border-[#4d6480] bg-gradient-to-r from-[#596f89] to-[#a5bad0]" />
      </div>
    </footer>
  );
}

function Watermark() {
  return (
    <div className="absolute right-[55px] bottom-[15px] z-40 flex h-[85px] w-[180px] items-center gap-3 bg-[#212f57] pl-3.5 text-[#d0d2da]">
      <svg viewBox="0 0 36 36" className="h-9 w-9 shrink-0" fill="none" stroke="currentColor" strokeWidth="2.500" strokeLinejoin="round" strokeLinecap="round" aria-hidden>
        <path d="M7 7v20c0 5 3 6 6 4l17-9c4-3 4-6 0-9L14 3C9 1 7 3 7 7z" />
        <path d="M2.500 9v18c0 4 3 7 7 6M11 9v17" strokeWidth="2" />
        <path d="m15 13 7 4.500-7 4.500z" fill="currentColor" stroke="none" />
        <path d="M24 14v7" strokeWidth="1.500" />
      </svg>
      <div className="whitespace-nowrap">
        <p className="font-['Noto_Sans_CJK_SC',sans-serif] text-[26px] leading-7 font-bold">溜溜自学</p>
        <p className="mt-0.5 font-['DejaVu_Sans',sans-serif] text-[12px] leading-3">ZiXUE.3D66.COM</p>
      </div>
    </div>
  );
}

export default function App() {
  return (
    <div className={`relative flex h-screen min-h-[540px] flex-col overflow-hidden bg-[#d9e4ee] pt-0.5 ${ui}`}>
      <div className="mr-0.5 mb-1 ml-px flex min-h-0 flex-1 flex-col rounded-t-[4px] border border-[#3d5c7c] bg-[#b7d0e8] bg-gradient-to-b from-[#9dbad9] to-[#b9d2ea] to-5% pr-1 pb-[3px] pl-[5px]">
        <TitleBar />
        <MenuBar />
        <Toolbars />
        <Workspace />
        <div className="bg-[#f0f0f0]">
          <CommandLine />
          <div className="flex h-[19px] items-center gap-3.5 border-t border-[#cfcfcf] bg-[#f1eeee] pl-[5px] text-[9px] text-[#222]">
            <span>给对象加倒角:</span>
            <span className={`text-[8px] ${mono}`}>CHAMFER</span>
          </div>
        </div>
      </div>
      <Taskbar />

      <svg viewBox="0 0 32 10" className="absolute right-[127px] bottom-[98px] h-2.5 w-8" fill="none" stroke="#d6dcd6" strokeWidth="2" aria-hidden>
        <circle cx="9" cy="9" r="6" />
        <circle cx="24" cy="9" r="6" />
      </svg>
      <Watermark />
      <span className="absolute -right-3.5 bottom-[121px] h-6 w-6 rounded-full border-2 border-[#d8efd8] bg-[#3ea64a]" />
    </div>
  );
}
